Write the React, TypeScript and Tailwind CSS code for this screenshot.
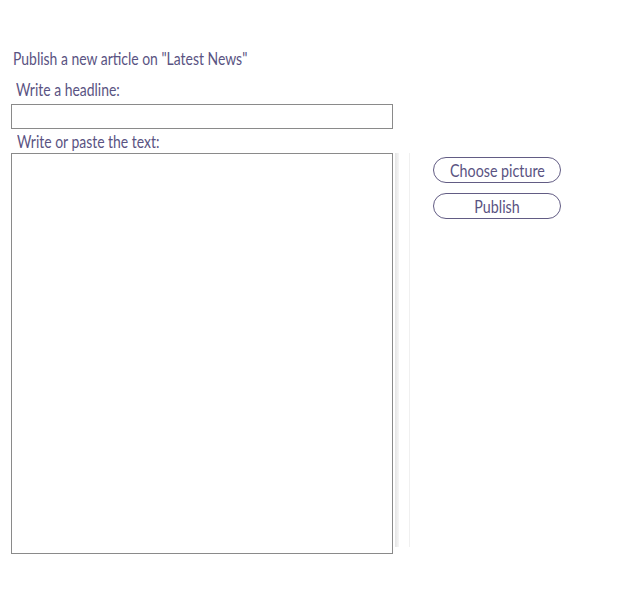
export default function App() {
  const font = { fontFamily: 'Lato, "Liberation Sans", sans-serif' };
  const sx = "inline-block origin-left scale-x-[0.82] whitespace-nowrap";
  return (
    <div className="w-[632px] h-[602px] bg-white text-[#5a5382] text-[17px]" style={font}>
      <div className="pt-[49px] pl-[13px] leading-[20px]"><span className={sx}>Publish a new article on "Latest News"</span></div>
      <div className="pl-[16px] mt-[11px] leading-[20px]"><span className={sx}>Write a headline:</span></div>
      <div className="pl-[11px] mt-[4px]">
        <div className="w-[382px] h-[25px] border border-[#8a8a8a] bg-white" />
      </div>
      <div className="pl-[17px] mt-[3px] leading-[20px]"><span className={sx}>Write or paste the text:</span></div>
      <div className="flex pl-[11px] mt-[1px]">
        <div className="w-[382px] h-[401px] border border-[#8a8a8a] bg-white" />
        <div className="ml-[2px] w-[4px] h-[394px] bg-gradient-to-r from-[#e4e4e4] to-[#f6f6f6]" />
        <div className="ml-[10px] w-px h-[394px] bg-[#f0f0f0]" />
        <div className="ml-[23px] mt-[4px] flex flex-col gap-[10px]">
          <button className="w-[128px] h-[26px] rounded-full border border-[#625c84] leading-[23px] text-center"><span className="inline-block scale-x-[0.84] whitespace-nowrap">Choose picture</span></button>
          <button className="w-[128px] h-[26px] rounded-full border border-[#625c84] leading-[23px] text-center"><span className="inline-block scale-x-[0.84] whitespace-nowrap">Publish</span></button>
        </div>
      </div>
    </div>
  );
}
